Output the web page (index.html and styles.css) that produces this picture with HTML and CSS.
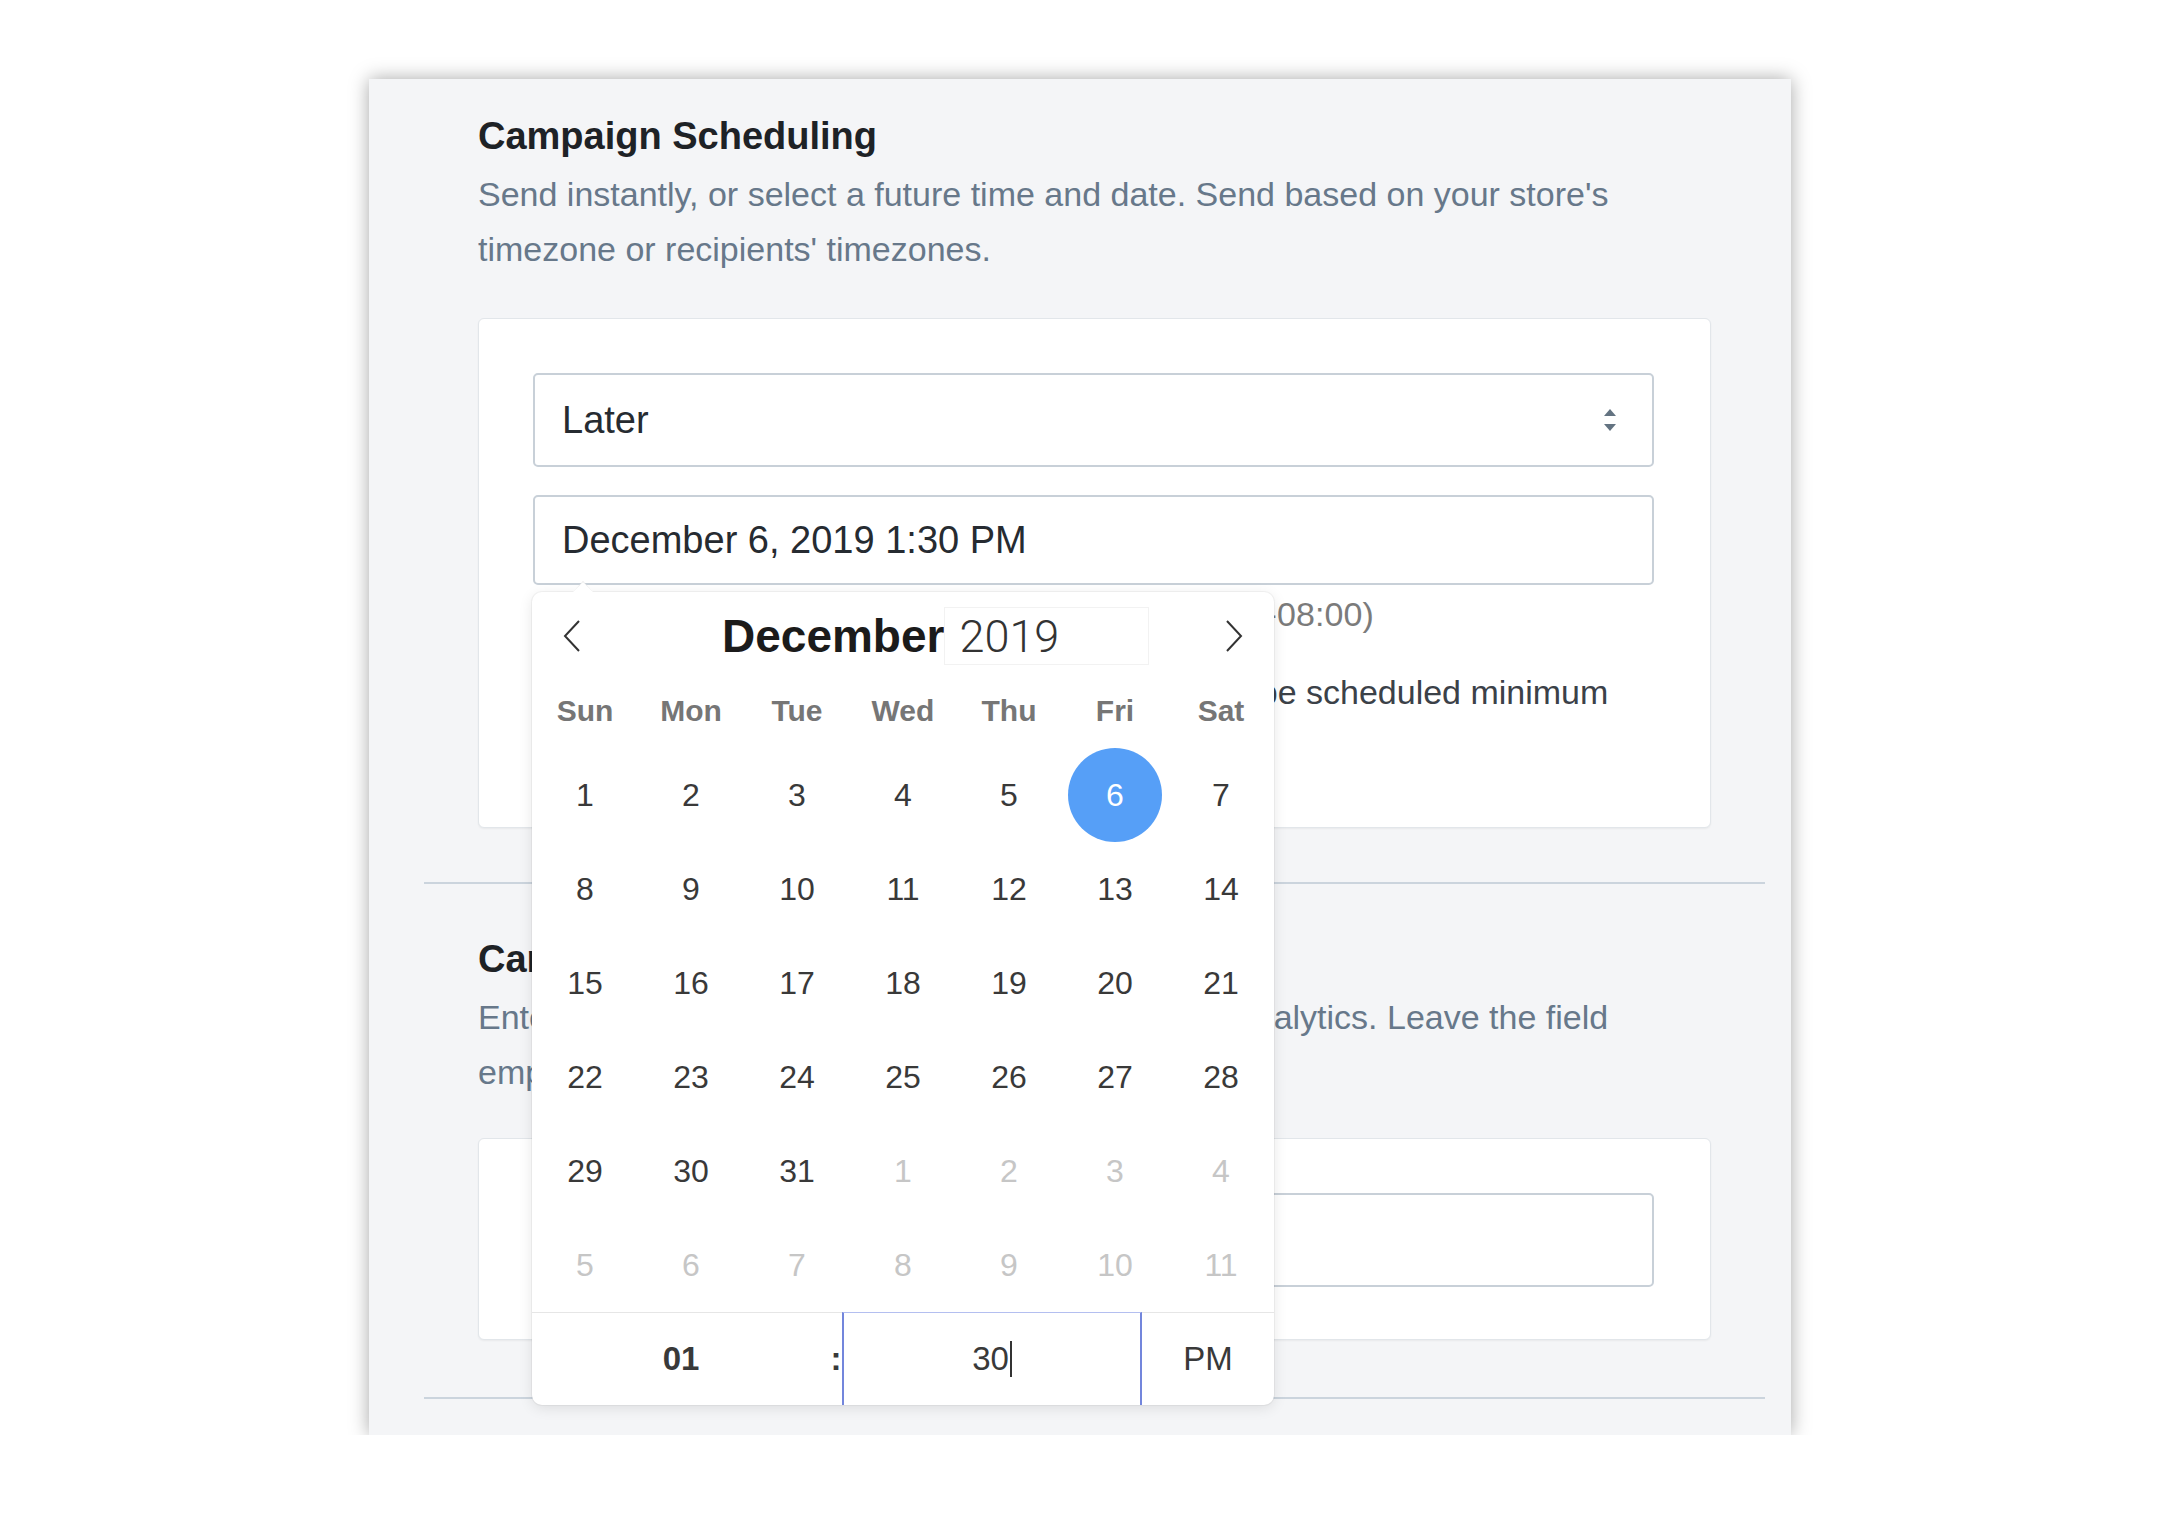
FILE: index.html
```html
<!DOCTYPE html>
<html lang="en">
<head>
  <meta charset="UTF-8" />
  <title>Campaign Scheduling</title>
  <link rel="stylesheet" href="styles.css">
</head>
<body>
  <div class="panel">
    <section class="section">
      <h2 class="section-title">Campaign Scheduling</h2>
      <p class="section-desc">Send instantly, or select a future time and date. Send based on your store's timezone or recipients' timezones.</p>

      <div class="card">
        <div class="select">
          <span>Later</span>
          <svg class="select-arrows" width="14" height="24" viewBox="0 0 14 24">
            <polygon points="1,8 7,1 13,8" fill="#637381"/>
            <polygon points="1,16 7,23 13,16" fill="#637381"/>
          </svg>
        </div>

        <div class="date-field">
          <div class="date-input">December 6, 2019 1:30 PM</div>

          <div class="picker">
            <div class="picker-head">
              <span class="nav">
                <svg width="18" height="32" viewBox="0 0 18 32"><polyline points="16,1 2,16 16,31" fill="none" stroke="#333" stroke-width="2"/></svg>
              </span>
              <div class="month">
                <span class="month-name">December</span>
                <span class="year">2019</span>
              </div>
              <span class="nav">
                <svg width="18" height="32" viewBox="0 0 18 32"><polyline points="2,1 16,16 2,31" fill="none" stroke="#333" stroke-width="2"/></svg>
              </span>
            </div>

            <div class="weekdays">
              <span>Sun</span><span>Mon</span><span>Tue</span><span>Wed</span><span>Thu</span><span>Fri</span><span>Sat</span>
            </div>

            <div class="days">
              <span class="day">1</span><span class="day">2</span><span class="day">3</span><span class="day">4</span><span class="day">5</span><span class="day"><span class="selected">6</span></span><span class="day">7</span>
              <span class="day">8</span><span class="day">9</span><span class="day">10</span><span class="day">11</span><span class="day">12</span><span class="day">13</span><span class="day">14</span>
              <span class="day">15</span><span class="day">16</span><span class="day">17</span><span class="day">18</span><span class="day">19</span><span class="day">20</span><span class="day">21</span>
              <span class="day">22</span><span class="day">23</span><span class="day">24</span><span class="day">25</span><span class="day">26</span><span class="day">27</span><span class="day">28</span>
              <span class="day">29</span><span class="day">30</span><span class="day">31</span><span class="day other">1</span><span class="day other">2</span><span class="day other">3</span><span class="day other">4</span>
              <span class="day other">5</span><span class="day other">6</span><span class="day other">7</span><span class="day other">8</span><span class="day other">9</span><span class="day other">10</span><span class="day other">11</span>
            </div>

            <div class="time">
              <span class="hour">01</span>
              <span class="sep">:</span>
              <span class="minute">30<i class="caret"></i></span>
              <span class="ampm">PM</span>
            </div>
          </div>
        </div>

        <p class="help">Time zone: Pacific Time (US and Canada) (GMT-08:00)</p>
        <p class="note">Info: campaigns set to send in the next hour will be scheduled minimum one hour ahead.</p>
      </div>
    </section>

    <section class="section">
      <h2 class="section-title">Campaign UTM Tracking</h2>
      <p class="section-desc">Enter a campaign name to track results in Google Analytics. Leave the field empty to use the campaign title.</p>

      <div class="card card-small">
        <div class="text-input"></div>
      </div>
    </section>
  </div>
</body>
</html>
```

FILE: styles.css
```css
body {
  margin: 0;
  padding: 79px 0 0 369px;
  background: #fff;
  font-family: "Liberation Sans", Arial, sans-serif;
}

.panel {
  width: 1422px;
  height: 1356px;
  box-sizing: border-box;
  padding: 0 26px 0 55px;
  background: #f4f5f7;
  box-shadow: 0 0 18px rgba(0, 0, 0, 0.35);
}

.section {
  padding: 34px 54px 54px;
  border-bottom: 2px solid #cbd4dd;
}
.section + .section {
  padding-top: 52px;
  padding-bottom: 57px;
}

.section-title {
  margin: 0;
  font-size: 38px;
  line-height: 46px;
  font-weight: bold;
  color: #1e2226;
}
.section-desc {
  margin: 8px 0 0;
  max-width: 1150px;
  font-size: 34px;
  line-height: 55px;
  color: #67788a;
}

/* white boxes */
.card {
  margin-top: 41px;
  padding: 54px 56px 69px 54px;
  background: #fff;
  border: 1px solid #e2e6ea;
  border-radius: 6px;
  box-shadow: 0 1px 2px rgba(0, 0, 0, 0.05);
}
.card-small {
  margin-top: 38px;
  padding-bottom: 52px;
}

.select,
.date-input,
.text-input {
  box-sizing: border-box;
  display: flex;
  align-items: center;
  background: #fff;
  border: 2px solid #c8d0d8;
  border-radius: 5px;
  padding: 0 35px 0 27px;
  font-size: 38px;
  color: #262b31;
}
.select {
  height: 94px;
  justify-content: space-between;
}
.date-input {
  height: 90px;
}
.text-input {
  height: 94px;
}

.date-field {
  position: relative;
  margin-top: 28px;
}

.help {
  margin: 7px 0 0;
  font-size: 34px;
  line-height: 44px;
  letter-spacing: 0.1px;
  color: #7b7b7b;
}
.note {
  margin: 34px 0 0;
  font-size: 34px;
  line-height: 44px;
  color: #3b4148;
}

/* calendar popup */
.picker {
  position: absolute;
  top: calc(100% + 7px);
  left: -1px;
  z-index: 2;
  width: 742px;
  background: #fff;
  border-radius: 10px;
  box-shadow: 0 3px 14px rgba(0, 0, 0, 0.1), 0 0 0 1px rgba(0, 0, 0, 0.04);
}
.picker::before,
.picker::after {
  content: "";
  position: absolute;
  left: 41px;
  border: 10px solid transparent;
  border-top: 0;
}
.picker::before {
  top: -11px;
  border-bottom: 11px solid #e6e6e6;
}
.picker::after {
  top: -10px;
  border-bottom: 10px solid #fff;
}

.picker-head {
  display: flex;
  align-items: center;
  height: 88px;
}
.nav {
  width: 80px;
  display: flex;
  justify-content: center;
}
.month {
  flex: 1;
  display: flex;
  align-items: center;
  padding-left: 110px;
  font-size: 46px;
  color: #1b1b1b;
}
.month-name {
  font-weight: bold;
}
.year {
  box-sizing: border-box;
  width: 205px;
  height: 58px;
  padding-left: 14px;
  display: flex;
  align-items: center;
  border: 1px solid #f2f2f2;
  font-family: Roboto, "Liberation Sans", sans-serif;
  font-size: 45px;
  font-weight: 300;
  color: #333;
}

.weekdays,
.days {
  display: grid;
  grid-template-columns: repeat(7, 106px);
  text-align: center;
}
.weekdays {
  height: 68px;
  padding-bottom: 6px;
  box-sizing: border-box;
  align-items: center;
  font-size: 30px;
  font-weight: bold;
  color: #767676;
}
.days {
  grid-auto-rows: 94px;
}
.day {
  display: flex;
  align-items: center;
  justify-content: center;
  font-size: 32px;
  color: #393939;
}
.day.other {
  color: #c6c6c6;
}
.selected {
  width: 94px;
  height: 94px;
  border-radius: 50%;
  display: flex;
  align-items: center;
  justify-content: center;
  background: #569ff7;
  color: #fff;
}

.time {
  display: flex;
  height: 93px;
  box-sizing: border-box;
  border-top: 1px solid #e6e6e6;
  font-size: 33px;
  color: #393939;
}
.time span {
  display: flex;
  align-items: center;
  justify-content: center;
}
.hour {
  width: 298px;
  font-weight: bold;
}
.sep {
  width: 12px;
  font-weight: bold;
}
.minute {
  box-sizing: border-box;
  width: 300px;
  margin-top: -1px;
  border: 2px solid #7386dc;
  border-top: 1px solid #b4bff0;
  border-bottom: 0;
}
.caret {
  width: 2px;
  height: 36px;
  margin-left: 1px;
  background: #333;
}
.ampm {
  flex: 1;
}
```
